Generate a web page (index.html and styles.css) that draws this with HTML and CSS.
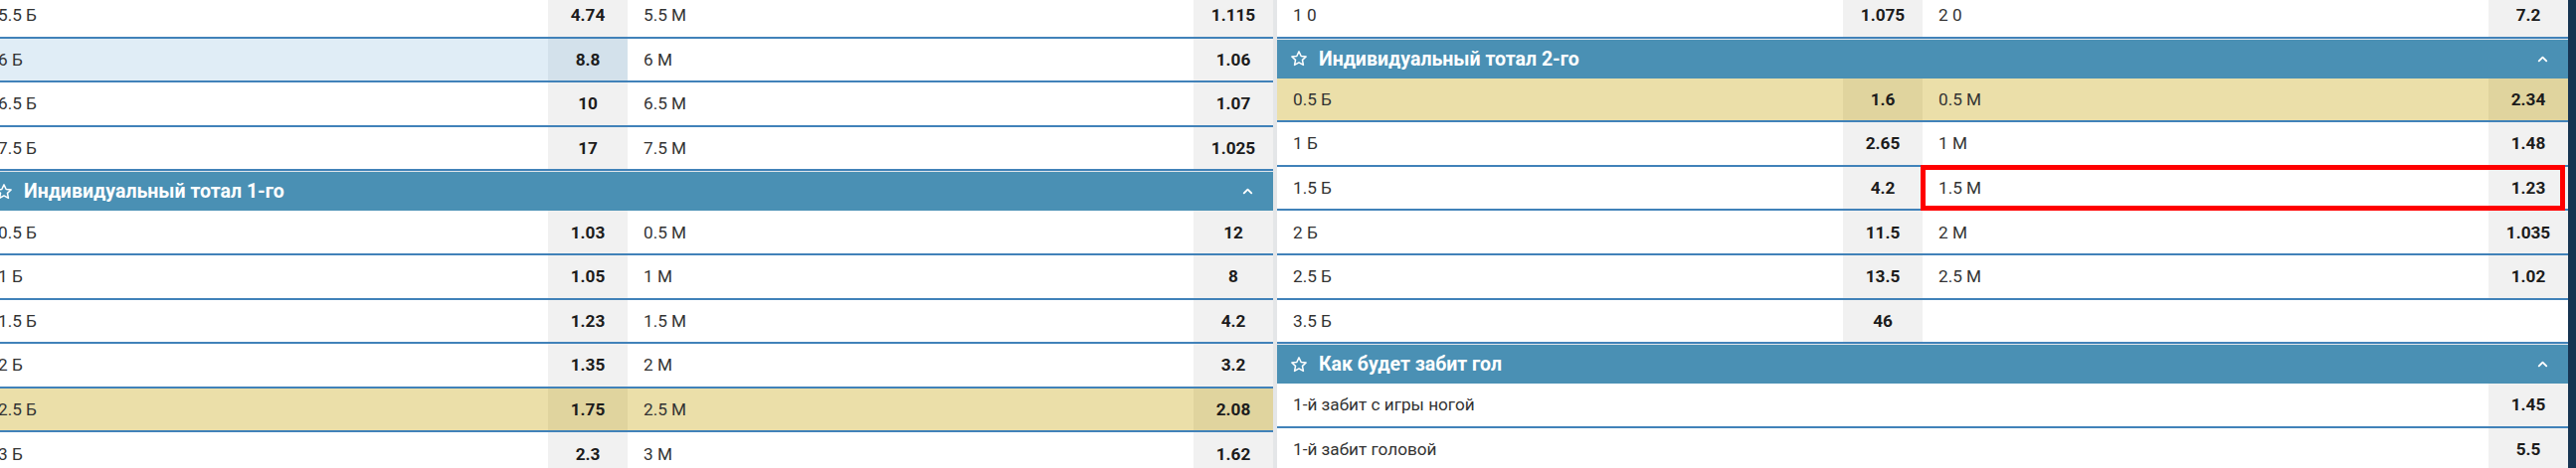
FILE: index.html
```html
<!DOCTYPE html>
<html lang="ru">
<head>
<meta charset="utf-8">
<title>Линия</title>
<link rel="stylesheet" href="styles.css">
</head>
<body>
<div class="page">
  <div class="col">
    <section class="market">
      <div class="row">
        <div class="half"><span class="label">5.5 Б</span><span class="odd">4.74</span></div>
        <div class="half"><span class="label">5.5 М</span><span class="odd">1.115</span></div>
      </div>
      <div class="row">
        <div class="half sel"><span class="label">6 Б</span><span class="odd">8.8</span></div>
        <div class="half"><span class="label">6 М</span><span class="odd">1.06</span></div>
      </div>
      <div class="row">
        <div class="half"><span class="label">6.5 Б</span><span class="odd">10</span></div>
        <div class="half"><span class="label">6.5 М</span><span class="odd">1.07</span></div>
      </div>
      <div class="row">
        <div class="half"><span class="label">7.5 Б</span><span class="odd">17</span></div>
        <div class="half"><span class="label">7.5 М</span><span class="odd">1.025</span></div>
      </div>
    </section>
    <section class="market">
      <header class="mhead">
        <svg class="star" viewBox="0 0 24 24"><polygon points="12,2.5 14.9,8.6 21.5,9.4 16.6,13.9 17.9,20.5 12,17.2 6.1,20.5 7.4,13.9 2.5,9.4 9.1,8.6"/></svg>
        <span class="mtitle">Индивидуальный тотал 1-го</span>
        <svg class="chev" viewBox="0 0 24 24"><polyline points="6,15 12,9 18,15"/></svg>
      </header>
      <div class="row">
        <div class="half"><span class="label">0.5 Б</span><span class="odd">1.03</span></div>
        <div class="half"><span class="label">0.5 М</span><span class="odd">12</span></div>
      </div>
      <div class="row">
        <div class="half"><span class="label">1 Б</span><span class="odd">1.05</span></div>
        <div class="half"><span class="label">1 М</span><span class="odd">8</span></div>
      </div>
      <div class="row">
        <div class="half"><span class="label">1.5 Б</span><span class="odd">1.23</span></div>
        <div class="half"><span class="label">1.5 М</span><span class="odd">4.2</span></div>
      </div>
      <div class="row">
        <div class="half"><span class="label">2 Б</span><span class="odd">1.35</span></div>
        <div class="half"><span class="label">2 М</span><span class="odd">3.2</span></div>
      </div>
      <div class="row hot">
        <div class="half"><span class="label">2.5 Б</span><span class="odd">1.75</span></div>
        <div class="half"><span class="label">2.5 М</span><span class="odd">2.08</span></div>
      </div>
      <div class="row">
        <div class="half"><span class="label">3 Б</span><span class="odd">2.3</span></div>
        <div class="half"><span class="label">3 М</span><span class="odd">1.62</span></div>
      </div>
    </section>
  </div>

  <div class="col">
    <section class="market">
      <div class="row">
        <div class="half"><span class="label">1 0</span><span class="odd">1.075</span></div>
        <div class="half"><span class="label">2 0</span><span class="odd">7.2</span></div>
      </div>
    </section>
    <section class="market">
      <header class="mhead">
        <svg class="star" viewBox="0 0 24 24"><polygon points="12,2.5 14.9,8.6 21.5,9.4 16.6,13.9 17.9,20.5 12,17.2 6.1,20.5 7.4,13.9 2.5,9.4 9.1,8.6"/></svg>
        <span class="mtitle">Индивидуальный тотал 2-го</span>
        <svg class="chev" viewBox="0 0 24 24"><polyline points="6,15 12,9 18,15"/></svg>
      </header>
      <div class="row hot">
        <div class="half"><span class="label">0.5 Б</span><span class="odd">1.6</span></div>
        <div class="half"><span class="label">0.5 М</span><span class="odd">2.34</span></div>
      </div>
      <div class="row">
        <div class="half"><span class="label">1 Б</span><span class="odd">2.65</span></div>
        <div class="half"><span class="label">1 М</span><span class="odd">1.48</span></div>
      </div>
      <div class="row">
        <div class="half"><span class="label">1.5 Б</span><span class="odd">4.2</span></div>
        <div class="half marked"><span class="label">1.5 М</span><span class="odd">1.23</span></div>
      </div>
      <div class="row">
        <div class="half"><span class="label">2 Б</span><span class="odd">11.5</span></div>
        <div class="half"><span class="label">2 М</span><span class="odd">1.035</span></div>
      </div>
      <div class="row">
        <div class="half"><span class="label">2.5 Б</span><span class="odd">13.5</span></div>
        <div class="half"><span class="label">2.5 М</span><span class="odd">1.02</span></div>
      </div>
      <div class="row">
        <div class="half"><span class="label">3.5 Б</span><span class="odd">46</span></div>
        <div class="half empty"></div>
      </div>
    </section>
    <section class="market">
      <header class="mhead">
        <svg class="star" viewBox="0 0 24 24"><polygon points="12,2.5 14.9,8.6 21.5,9.4 16.6,13.9 17.9,20.5 12,17.2 6.1,20.5 7.4,13.9 2.5,9.4 9.1,8.6"/></svg>
        <span class="mtitle">Как будет забит гол</span>
        <svg class="chev" viewBox="0 0 24 24"><polyline points="6,15 12,9 18,15"/></svg>
      </header>
      <div class="row">
        <div class="half"><span class="label">1-й забит с игры ногой</span><span class="odd">1.45</span></div>
      </div>
      <div class="row">
        <div class="half"><span class="label">1-й забит головой</span><span class="odd">5.5</span></div>
      </div>
    </section>
  </div>
</div>
</body>
</html>
```

FILE: styles.css
```css
html, body {
  margin: 0;
  padding: 0;
}

body {
  width: 2590px;
  height: 471px;
  overflow: hidden;
  background: #163452;
  font-family: Roboto, "Noto Sans", sans-serif;
  font-size: 17.2px;
  color: #333;
}

.page {
  display: flex;
  gap: 4px;
  width: 2600px;
  margin: -6px 0 0 -18px;
  background: #e4e6e8;
  height: 490px;
}

.col {
  width: 1298px;
  flex: none;
  background: #fff;
}

.mhead {
  display: flex;
  align-items: center;
  height: 39px;
  border-top: 1px solid #dfe6eb;
  background: #4a90b4;
  color: #fff;
  padding: 0 18px 0 13px;
}

.star {
  width: 18px;
  height: 18px;
  fill: none;
  stroke: #fff;
  stroke-width: 2;
  stroke-linejoin: round;
  margin-right: 11px;
}

.mtitle {
  flex: 1;
  font-weight: 700;
  font-size: 19.5px;
}

.chev {
  width: 15px;
  height: 15px;
  fill: none;
  stroke: #fff;
  stroke-width: 3;
  stroke-linecap: round;
  stroke-linejoin: round;
}

.row {
  display: flex;
  height: 42.6px;
  border-bottom: 2px solid #4182b9;
  background: #fff;
}

.half {
  flex: 1;
  display: flex;
  min-width: 0;
}

.label {
  flex: 1;
  display: flex;
  align-items: center;
  padding-left: 16px;
}

.odd {
  width: 80px;
  flex: none;
  display: flex;
  align-items: center;
  justify-content: center;
  background: #f1f1f1;
  font-weight: 700;
  color: #1c1c1c;
}

.half.sel {
  background: #e0edf6;
}

.half.sel .odd {
  background: #d3e1eb;
}

.row.hot {
  background: #ebdfa9;
}

.row.hot .odd {
  background: #e0d49e;
}

.half.marked {
  position: relative;
}

.half.marked::after {
  content: "";
  position: absolute;
  top: -2px;
  bottom: -2px;
  left: -2px;
  right: 3px;
  border: 5px solid #ff0000;
  pointer-events: none;
}
```
